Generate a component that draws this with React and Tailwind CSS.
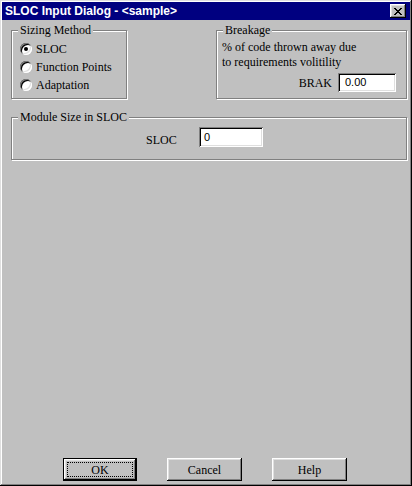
import React from "react";

const serif = "text-[12px] leading-[14px] text-black";

function Radio({ checked, label }) {
  return (
    <div className="flex h-[18px] items-center">
      <div className="relative flex h-[12px] w-[12px] items-center justify-center rounded-full bg-white shadow-[inset_1px_1px_#808080,inset_-1px_-1px_#ffffff,inset_2px_2px_#000000,inset_-2px_-2px_#dfdfdf]">
        {checked && <div className="h-[4px] w-[4px] rounded-full bg-black" />}
      </div>
      <span className="ml-[4px] text-[12px] leading-[14px] text-black">{label}</span>
    </div>
  );
}

function Group({ label, className, children }) {
  return (
    <div className={`relative border border-[#808080] shadow-[inset_1px_1px_#ffffff,1px_1px_#ffffff] ${className}`}>
      <span className="absolute left-[6px] top-[-8px] bg-[#c0c0c0] px-[2px] text-[12px] leading-[14px] text-black">{label}</span>
      {children}
    </div>
  );
}

function Field({ value, className }) {
  return (
    <div className={`flex items-center bg-white shadow-[inset_1px_1px_#808080,inset_-1px_-1px_#ffffff,inset_2px_2px_#000000,inset_-2px_-2px_#dfdfdf] font-['Liberation_Sans',Arial,sans-serif] text-[11px] text-black ${className}`}>
      {value}
    </div>
  );
}

function Button({ label, isDefault, className }) {
  if (isDefault) {
    return (
      <div className={`border border-black ${className}`}>
        <div className="flex h-full w-full items-center justify-center p-[3px] shadow-[inset_-1px_-1px_#000000,inset_1px_1px_#ffffff,inset_-2px_-2px_#808080,inset_2px_2px_#dfdfdf]">
          <div className="flex h-full w-full items-center justify-center border border-dotted border-black text-[12px] leading-[14px] text-black">
            {label}
          </div>
        </div>
      </div>
    );
  }
  return (
    <div className={`flex items-center justify-center text-[12px] leading-[14px] text-black shadow-[inset_-1px_-1px_#000000,inset_1px_1px_#ffffff,inset_-2px_-2px_#808080,inset_2px_2px_#dfdfdf] ${className}`}>
      {label}
    </div>
  );
}

export default function App() {
  return (
    <div className="flex h-[486px] w-[412px] flex-col bg-[#c0c0c0] font-['Liberation_Serif','Times_New_Roman',serif] shadow-[inset_-1px_-1px_#000000,inset_1px_1px_#dfdfdf,inset_-2px_-2px_#808080,inset_2px_2px_#ffffff]">
      <div className="mx-[2px] mt-[2px] flex h-[18px] items-center bg-[#000080] pl-[3px] pr-[4px]">
        <span className="font-['Liberation_Sans',Arial,sans-serif] text-[12px] font-bold leading-[14px] text-white">
          SLOC Input Dialog - &lt;sample&gt;
        </span>
        <div className="ml-auto flex h-[14px] w-[16px] items-center justify-center bg-[#c0c0c0] shadow-[inset_-1px_-1px_#000000,inset_1px_1px_#ffffff,inset_-2px_-2px_#808080,inset_2px_2px_#dfdfdf]">
          <svg width="8" height="7" viewBox="0 0 8 7" shapeRendering="crispEdges">
            <path d="M0 0h2v1h-2zM6 0h2v1h-2zM1 1h2v1h-2zM5 1h2v1h-2zM2 2h4v1h-4zM3 3h2v1h-2zM2 4h4v1h-4zM1 5h2v1h-2zM5 5h2v1h-2zM0 6h2v1h-2zM6 6h2v1h-2z" fill="#000" />
          </svg>
        </div>
      </div>

      <div className="flex flex-1 flex-col pl-[11px] pr-[5px]">
        <div className="mt-[10px] flex">
          <Group label="Sizing Method" className="h-[69px] w-[116px] pl-[8px] pt-[9px]">
            <Radio checked label="SLOC" />
            <Radio label="Function Points" />
            <Radio label="Adaptation" />
          </Group>
          <Group label="Breakage" className="ml-auto flex h-[69px] w-[191px] flex-col pl-[5px] pt-[9px]">
            <div className="text-[12px] leading-[15px] text-black">% of code thrown away due</div>
            <div className="text-[12px] leading-[15px] text-black">to requirements volitility</div>
            <div className="mt-[3px] flex items-center justify-end pr-[10px]">
              <span className={`${serif} mr-[6px]`}>BRAK</span>
              <Field value="0.00" className="h-[19px] w-[58px] pl-[7px]" />
            </div>
          </Group>
        </div>

        <Group label="Module Size in SLOC" className="mt-[18px] flex h-[43px] items-start pl-[134px] pt-[9px]">
          <span className="mt-[6px] w-[53px] text-[12px] leading-[14px] text-black">SLOC</span>
          <Field value="0" className="h-[20px] w-[64px] pl-[5px]" />
        </Group>

        <div className="flex-1" />

        <div className="mb-[5px] flex gap-[30px] pl-[52px]">
          <Button isDefault label="OK" className="h-[23px] w-[74px]" />
          <Button label="Cancel" className="h-[23px] w-[75px]" />
          <Button label="Help" className="h-[23px] w-[75px]" />
        </div>
      </div>
    </div>
  );
}
